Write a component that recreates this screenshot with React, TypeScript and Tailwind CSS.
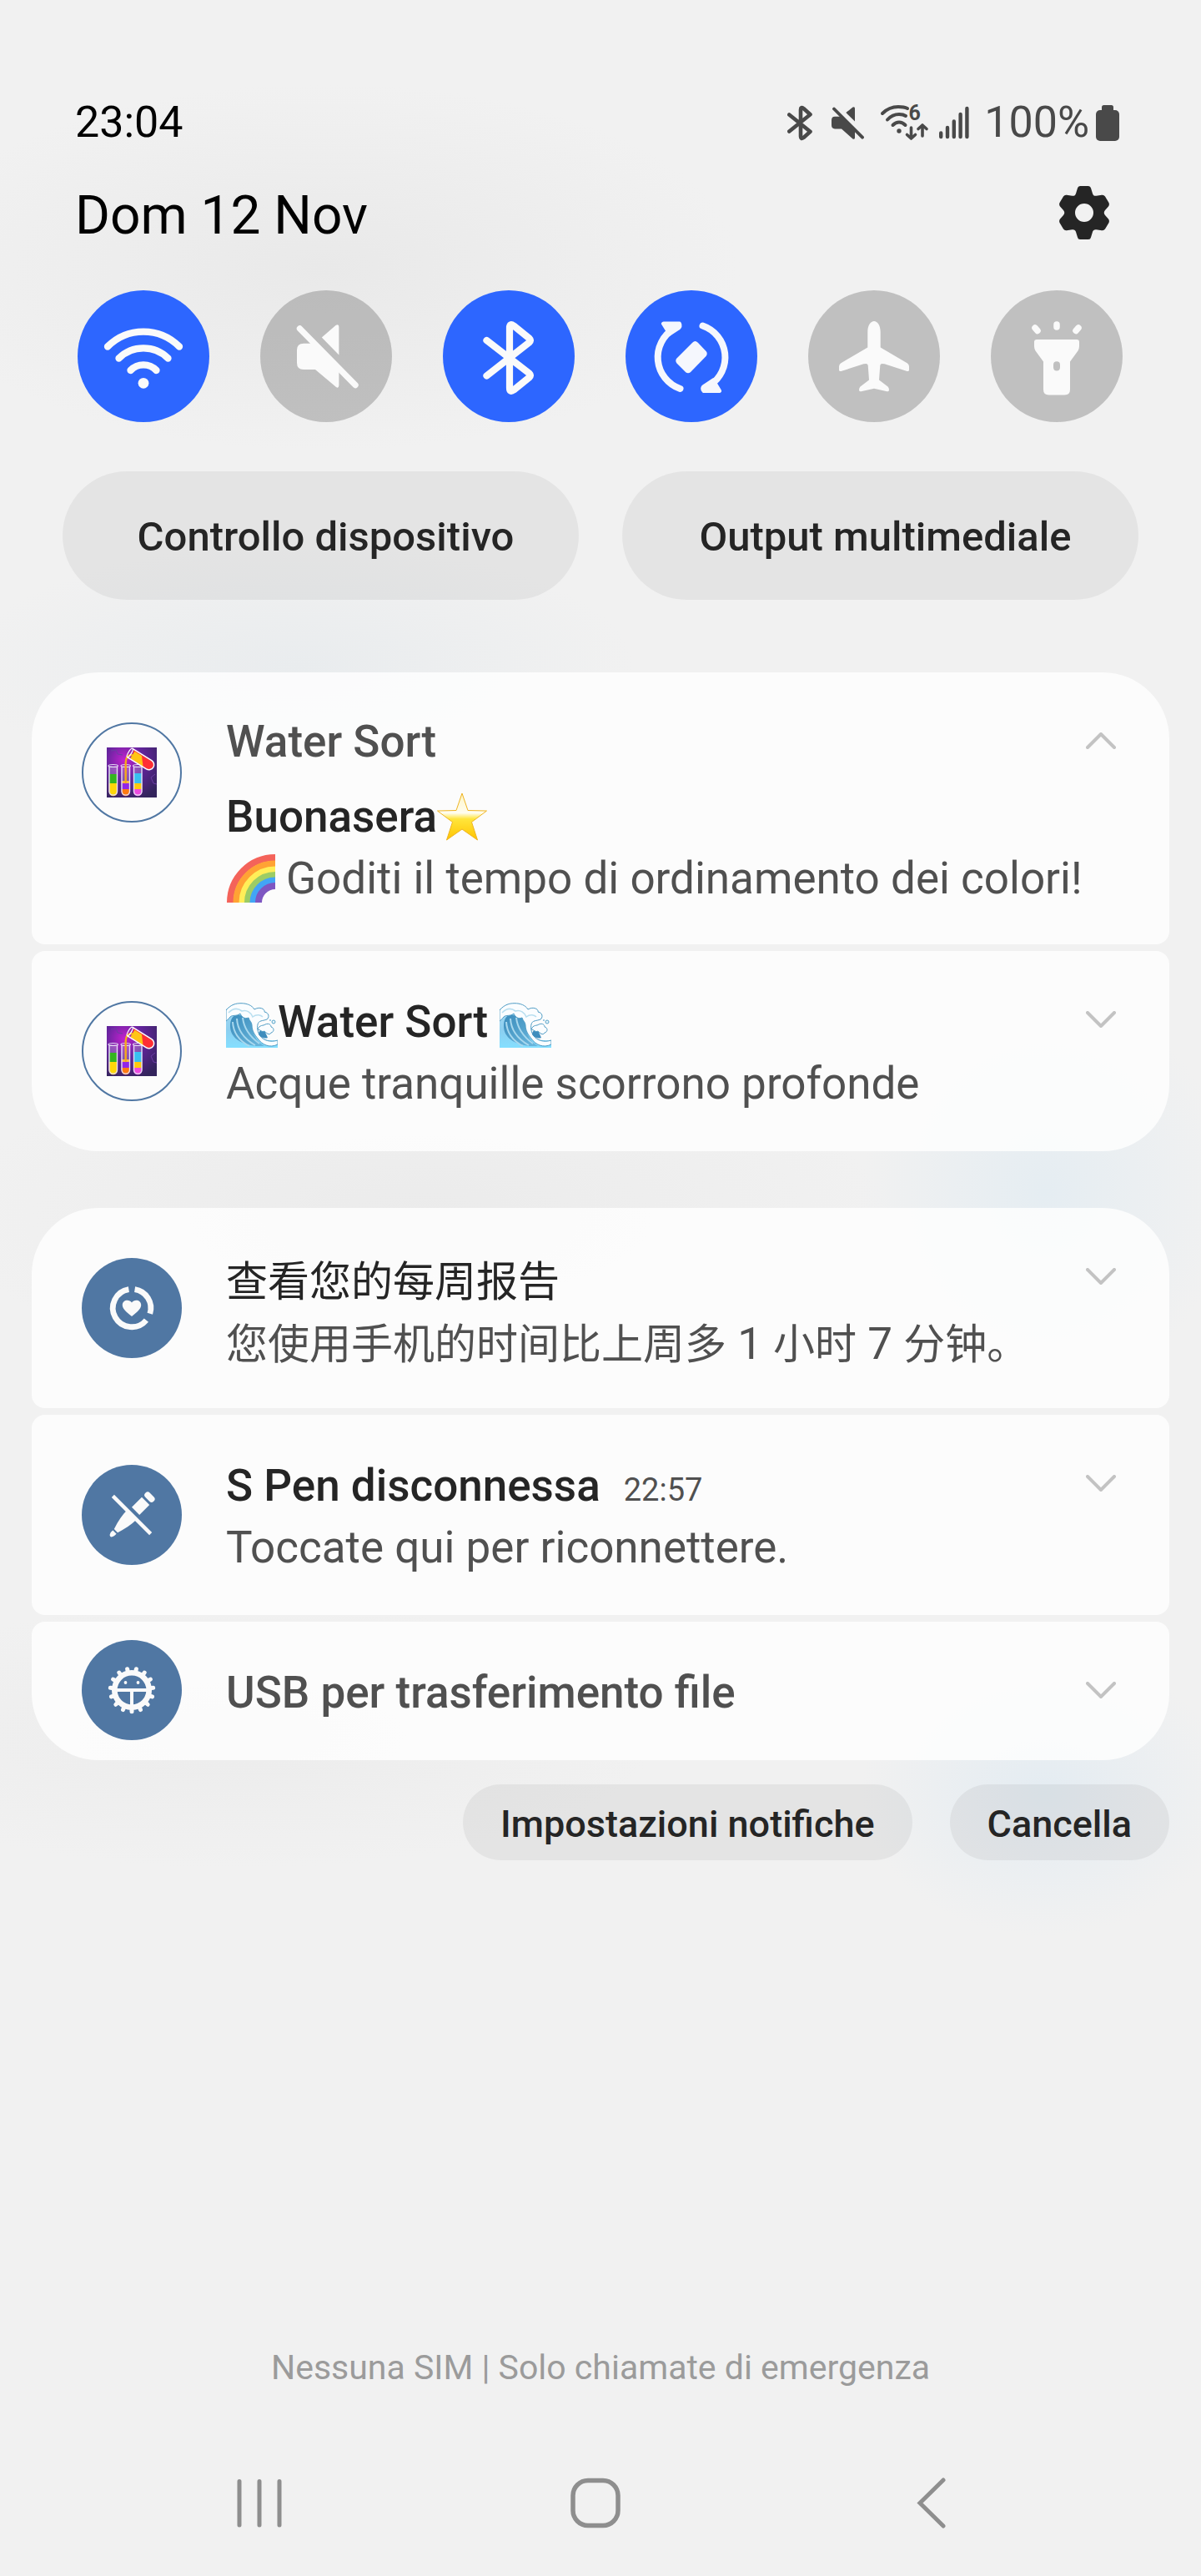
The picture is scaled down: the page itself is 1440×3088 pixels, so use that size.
import React from "react";

type IconProps = { className?: string };

/* ---------- Status bar icons ---------- */

function StatusBluetooth() {
  return (
    <svg viewBox="0 0 30 43" className="h-[43px] w-[30px]" fill="none" stroke="#494949" strokeWidth="4.6" strokeLinecap="round" strokeLinejoin="round" aria-label="Bluetooth">
      <path d="M2.3 11.5 27.5 31.8 19.5 39Q16 41.5 16 37.5V5.500Q16 1.500 19.500 4L27.500 11.200 2.300 31.500" />
    </svg>
  );
}

function StatusMute() {
  return (
    <svg viewBox="0 0 39 39" className="h-[39px] w-[39px]" fill="#494949" aria-label="Muto">
      <path d="M3 2.500 37 36.700" stroke="#494949" strokeWidth="3.800" strokeLinecap="round" />
      <path d="M4 11.700H13L28 27V37.500Q27.500 39.500 25.500 38.500L12 26.400H4Q0 26.400 0 22V16Q0 11.700 4 11.700Z" />
      <path d="M17.300 7 25.500 .6Q28 -.6 28 2V17.500Z" />
    </svg>
  );
}

function StatusWifi() {
  return (
    <svg viewBox="0 0 57 44" className="h-[44px] w-[57px] overflow-visible" fill="none" stroke="#494949" strokeWidth="4" strokeLinecap="round" strokeLinejoin="round" aria-label="Wi-Fi 6">
      <path d="M2 11Q10 3 21 3 28 3 32 5" />
      <path d="M8 18.500Q14 12 22 12 27 12 30 14" />
      <path d="M14.500 25Q18 21.500 22 21.500T29.500 25" />
      <circle cx="22" cy="32" r="2.700" fill="#494949" stroke="none" />
      <text x="33.500" y="19" fill="#494949" stroke="none" fontFamily="Roboto, sans-serif" fontWeight="700" fontSize="25">6</text>
      <path d="M36.500 28V40.500M31.500 36.500 36.500 41 41.500 36.500M50 38V25M45 29.500 50 25 55 29.500" strokeWidth="3.600" />
    </svg>
  );
}

function StatusSignal() {
  return (
    <svg viewBox="0 0 36 40" className="h-[40px] w-[36px]" stroke="#494949" strokeWidth="4.400" strokeLinecap="round" aria-label="Segnale">
      <path d="M2.200 32.500V37M10 26V37M17.800 18.500V37M25.600 10V37M33.400 3V37" />
    </svg>
  );
}

function StatusBattery() {
  return (
    <svg viewBox="0 0 28 43" className="h-[43px] w-[28px]" fill="#494949" aria-label="Batteria">
      <rect x="7" y="0" width="14" height="12" rx="2.500" />
      <rect x="0" y="6" width="28" height="37" rx="5" />
    </svg>
  );
}

function GearIcon() {
  return (
    <svg viewBox="0 0 60 64" className="h-16 w-[60px]" fill="#252525" aria-hidden="true">
      <path
        fillRule="evenodd"
        d="M25 0H35Q37.500 0 38 2.500L40 9Q41 12.300 44.500 11.800L51 10.800Q53.500 10.300 55 12.500L59.500 20Q60.500 22.500 59 24.500L55 29Q52.500 32 55 35L59 39.500Q60.500 41.500 59.500 44L55 51.500Q53.500 53.700 51 53.200L44.500 52.200Q41 51.700 40 55L38 61.500Q37.500 64 35 64H25Q22.500 64 22 61.500L20 55Q19 51.700 15.500 52.200L9 53.200Q6.500 53.700 5 51.500L.5 44Q-.5 41.500 1 39.500L5 35Q7.500 32 5 29L1 24.500Q-.5 22.500 .5 20L5 12.500Q6.500 10.300 9 10.800L15.500 11.800Q19 12.300 20 9L22 2.500Q22.500 0 25 0ZM30 21A11 11 0 1 0 30 43A11 11 0 1 0 30 21Z"
      />
    </svg>
  );
}

/* ---------- Quick toggle icons ---------- */

function TileSvg({ children }: { children: React.ReactNode }) {
  return (
    <svg viewBox="0 0 158 158" className="h-full w-full" fill="none" stroke="none" strokeLinecap="round" strokeLinejoin="round" aria-hidden="true">
      {children}
    </svg>
  );
}

const WifiGlyph = () => (
  <TileSvg>
    <g stroke="#fafafa" strokeWidth="8.300">
      <path d="M36 67.500A60.500 60.500 0 0 1 122 67.500" />
      <path d="M49.500 81.500A42 42 0 0 1 108.500 81.500" />
      <path d="M63.500 96A21.500 21.500 0 0 1 94.500 96" />
    </g>
    <circle cx="79" cy="111.300" r="6.400" fill="#fafafa" />
  </TileSvg>
);

const MuteGlyph = () => (
  <TileSvg>
    <path d="M47.500 46 114 113.500" stroke="#fafafa" strokeWidth="7.400" />
    <path d="M52 63.700H62L94.400 96V114Q94 118 91 116L66 95H52Q44 95 44 87V71.500Q44 63.700 52 63.700Z" fill="#fafafa" />
    <path d="M73.800 56.500 90.500 42Q94.400 40 94.400 44V77.500Z" fill="#fafafa" />
  </TileSvg>
);

const BluetoothGlyph = () => (
  <TileSvg>
    <path d="M52.500 60 103.500 99.500Q106 102 103.500 104.500L85 119.500Q80 123 80 117V45Q80 39 85 42.500L103.500 57.500Q106 60 103.500 62.500L52.500 102.500" stroke="#fafafa" strokeWidth="8.200" />
  </TileSvg>
);

const RotateGlyph = () => (
  <TileSvg>
    <g stroke="#f5f7fd" strokeWidth="8">
      <path d="M58 46A40 40 0 0 0 65.500 118" />
      <path d="M92.500 42.500A40 40 0 0 1 101 114" />
    </g>
    <g fill="#f5f7fd" stroke="#f5f7fd" strokeWidth="5">
      <path d="M45.500 40H64.500Q66 43 63 45.500L53 52Z" />
      <path d="M112.500 120.500H94Q91 117 94.500 115L105 108Z" />
      <path d="M82 64.500Q83.500 63 85 64.500L94.500 74.500Q95.800 76 94.500 77.500L76.500 96Q75 97.300 73.500 96L63.500 86Q62.200 84.500 63.500 83Z" />
    </g>
  </TileSvg>
);

const PlaneGlyph = () => (
  <TileSvg>
    <path
      d="M79 37C83 37 86.700 42 86.700 50V68.500L119 87.500Q121 89 121 91.500V95.500Q121 97.500 118.500 97L91.500 88.300Q86.500 87 86.300 90L85 107.500L95.500 115.500Q97 117 97 119.500 97 121.800 94.500 121.200L79 117.800 63.500 121.200Q61 121.800 61 119.500 61 117 62.500 115.500L73 107.500 71.700 90Q71.500 87 66.500 88.300L39.500 97Q37 97.500 37 95.500V91.500Q37 89 39 87.500L71.300 68.500V50C71.300 42 75 37 79 37Z"
      fill="#fafafa"
    />
  </TileSvg>
);

const TorchGlyph = () => (
  <TileSvg>
    <path
      fillRule="evenodd"
      d="M55 59H103Q106 59 106 62V67Q106 70 104.500 72.500L95 85.500V119Q95 125.500 88.500 125.500H69.500Q63 125.500 63 119V85.500L53.500 72.500Q52 70 52 67V62Q52 59 55 59ZM79 85.300Q75 85.300 75 89.500V92.300Q75 96.500 79 96.500 83 96.500 83 92.300V89.500Q83 85.300 79 85.300Z"
      fill="#fafafa"
    />
    <path d="M79 41V44M53 45 56 48.500M105 45 102 48.500" stroke="#fafafa" strokeWidth="7.500" />
  </TileSvg>
);

/* ---------- Emoji drawings ---------- */

function StarEmoji({ className }: IconProps) {
  return (
    <svg viewBox="0 0 60 58" className={className} role="img" aria-label="⭐">
      <defs>
        <linearGradient id="starFill" x1="0" y1="0" x2="0" y2="1">
          <stop offset="0" stopColor="#fff6c4" />
          <stop offset=".42" stopColor="#fffdf0" />
          <stop offset=".55" stopColor="#ffe53b" />
          <stop offset="1" stopColor="#ffc400" />
        </linearGradient>
      </defs>
      <path d="M30 1 37 21.500 59.500 22 41.500 35.500 48.500 57 30 44 11.500 57 18.500 35.500 .5 22 23 21.500Z" fill="url(#starFill)" stroke="#efb422" strokeWidth="1" strokeLinejoin="round" />
    </svg>
  );
}

function RainbowEmoji({ className }: IconProps) {
  const bands = [
    { r: 54, color: "#f4635a" },
    { r: 46.500, color: "#ffa334" },
    { r: 39.500, color: "#ffee58" },
    { r: 33, color: "#9ccc65" },
    { r: 26.500, color: "#42a5f5" },
    { r: 20, color: "#7e57c2" },
  ];
  return (
    <svg viewBox="0 0 60 58" className={className} role="img" aria-label="🌈">
      {bands.map((b) => (
        <path key={b.color} d={`M${59 - b.r} 58A${b.r} ${b.r} 0 0 1 59 ${58 - b.r}`} fill="none" stroke={b.color} strokeWidth="8" />
      ))}
    </svg>
  );
}

function WaveEmoji({ className }: IconProps) {
  return (
    <svg viewBox="0 0 62 54" className={className} role="img" aria-label="🌊">
      <defs>
        <linearGradient id="waveFill" x1="0" y1="0" x2="0" y2="1">
          <stop offset="0" stopColor="#a9daf1" />
          <stop offset=".6" stopColor="#8ccff0" />
          <stop offset="1" stopColor="#84dfff" />
        </linearGradient>
        <linearGradient id="waveFace" x1="0" y1="0" x2="1" y2="1">
          <stop offset="0" stopColor="#3b8cbc" />
          <stop offset="1" stopColor="#6cb9de" />
        </linearGradient>
      </defs>
      <path d="M0 8Q8 1 18 1L34 12 36 36Q42 47 62 45V54H0Z" fill="url(#waveFill)" />
      <path d="M5 28C5 18 10 13 17 15L30 17 32 32Q34 45 46 52H36C18 50 5 42 5 28Z" fill="url(#waveFace)" />
      <path d="M8 23Q9 42 28 52M13 19Q14 39 35 51M20 18Q22 36 40 49" fill="none" stroke="#a8d8ee" strokeWidth="2" />
      <path
        d="M0 9C6 2 12 .7 18 .7 25 .7 31 3 34 8 41 4 47 8 46 11 52 12 52 18 49 20 44 22 39 21 38 26 37 30 38 36 41 40 45 45 53 48 62 45V50C52 55 43 50 38 43 34 38 31 33 31 27 31 23 28 22 27 18 22 20 19 17 17 13 12 17 8 14 5 17 3 19 2 21 0 22Z"
        fill="#fafdff"
        stroke="#4e9bc4"
        strokeWidth="1"
      />
      <path d="M3 12C9 6 15 7 19 10 25 8 30 12 32 17 37 13 42 15 44 17" fill="none" stroke="#b9dff0" strokeWidth="1.600" />
      <path d="M39 38C39 33 43 32 46 33L50 42Q44 44 39 38Z" fill="#3f8dbd" />
      <path d="M38 32C40 26 45 28 47 26 52 24 54 27 54 29 58 30 58 35 54 36 52 40 48 36 46 34 43 36 41 32 38 32Z" fill="#fafdff" stroke="#4e9bc4" strokeWidth="1" />
      <circle cx="57" cy="23" r="2" fill="#e9f7fd" stroke="#57a2c8" strokeWidth="1" />
      <circle cx="53" cy="21" r="1" fill="#7db9d8" />
    </svg>
  );
}

/* ---------- Notification icons ---------- */

function WaterSortIcon() {
  const tubes = [
    { x: 2.500, layers: [{ y: 32, h: 12, c: "#34b51f" }, { y: 43, h: 16, c: "#ffd60a" }] },
    { x: 17.500, layers: [{ y: 40, h: 4, c: "#f7b84a" }, { y: 43, h: 8, c: "#9226e8" }, { y: 50, h: 9, c: "#ff7a12" }] },
    { x: 32, layers: [{ y: 31, h: 13, c: "#38c0f0" }, { y: 43, h: 8, c: "#ffc90e" }, { y: 50, h: 9, c: "#ec4be0" }] },
  ];
  return (
    <svg viewBox="0 0 60 60" className="h-[60px] w-[60px]" aria-hidden="true">
      <defs>
        <radialGradient id="labGlow" cx=".35" cy=".25" r=".85">
          <stop offset="0" stopColor="#c322cf" />
          <stop offset=".45" stopColor="#62249c" />
          <stop offset="1" stopColor="#33245c" />
        </radialGradient>
      </defs>
      <rect width="60" height="60" fill="url(#labGlow)" />
      <path d="M5 4 11 3 13 8 19 9M53 36 58 32M53 36 56 43 60 44" fill="none" stroke="#6c3da3" strokeWidth="1" />
      {tubes.map((t) => (
        <g key={t.x}>
          <clipPath id={`tube${Math.round(t.x)}`}>
            <path d={`M${t.x} 22H${t.x + 10.500}V53A5.200 5.200 0 0 1 ${t.x} 53Z`} />
          </clipPath>
          <g clipPath={`url(#tube${Math.round(t.x)})`}>
            <rect x={t.x} y="22" width="10.500" height="37" fill="#ffffff" opacity=".22" />
            {t.layers.map((l) => (
              <rect key={l.y} x={t.x} y={l.y} width="10.500" height={l.h} fill={l.c} />
            ))}
          </g>
          <path d={`M${t.x + .5} 23V53A4.800 4.800 0 0 0 ${t.x + 10} 53V23`} fill="none" stroke="#e6dcf5" strokeWidth="1.400" />
          <ellipse cx={t.x + 5.200} cy="22" rx="5.700" ry="1.500" fill="none" stroke="#e6dcf5" strokeWidth="1.200" />
        </g>
      ))}
      <path d="M30 9Q23 9 22.700 18V42" fill="none" stroke="#f5a91b" strokeWidth="2.400" strokeLinecap="round" />
      <g transform="translate(28 6) rotate(32)">
        <path d="M2 -5H27A5.500 5.500 0 0 1 27 6H6Z" fill="#ff2f35" />
        <path d="M4 -4H14L22 6H4Z" fill="#ffc515" />
        <path d="M0 -5.500H27A6 6 0 0 1 27 6.500H0" fill="none" stroke="#fff" strokeWidth="1.500" />
        <ellipse cx="0" cy=".5" rx="1.800" ry="6" fill="none" stroke="#fff" strokeWidth="1.300" />
      </g>
    </svg>
  );
}

function WellbeingIcon() {
  return (
    <svg viewBox="0 0 120 120" className="h-full w-full" aria-hidden="true">
      <g fill="none" stroke="#fafafa" strokeWidth="6.800">
        <path d="M63.600 37.600A22.700 22.700 0 0 1 81.800 66.800" />
        <path d="M77.400 74.600A22.700 22.700 0 1 1 56.400 37.600" />
      </g>
      <path d="M60 70C52 64 48.800 60 48.800 56.500C48.800 50 57 49 60 53.500C63 49 71.200 50 71.200 56.500C71.200 60 68 64 60 70Z" fill="#fafafa" />
    </svg>
  );
}

function PenIcon() {
  return (
    <svg viewBox="0 0 120 120" className="h-full w-full" aria-hidden="true">
      <g transform="translate(60 60) rotate(45)" fill="#fafafa">
        <rect x="-32" y="-2.200" width="64" height="4.400" />
        <rect x="-7" y="-34" width="14" height="7.500" rx="3.500" />
        <rect x="-6.500" y="-23.500" width="13" height="17" />
        <path d="M-8 1H8Q8 12 3 27H-3Q-8 12 -8 1Z" />
        <path d="M-3 29H3V32.500Q2 36.500 0 36.500T-3 32.500Z" />
      </g>
    </svg>
  );
}

function AndroidGearIcon() {
  const teeth = Array.from({ length: 15 }, (_, i) => i * 24 + 180);
  return (
    <svg viewBox="0 0 120 120" className="h-full w-full" aria-hidden="true">
      <g stroke="#fafafa" fill="none">
        {teeth.map((angle) => (
          <path key={angle} d="M60 38V34.200" strokeWidth="5" strokeLinecap="round" transform={`rotate(${angle} 60 60)`} />
        ))}
        <circle cx="60" cy="60" r="20.700" strokeWidth="6.600" />
        <path d="M42 60H78M60 60V80" strokeWidth="4" />
      </g>
      <circle cx="52.500" cy="51" r="1.900" fill="#fafafa" />
      <circle cx="67.500" cy="51" r="1.900" fill="#fafafa" />
    </svg>
  );
}

/* ---------- Building blocks ---------- */

function Tile({ label, on, children }: { label: string; on: boolean; children: React.ReactNode }) {
  return (
    <button type="button" aria-label={label} aria-pressed={on} className={`size-[158px] rounded-full ${on ? "bg-[#2d66ff]" : "bg-black/20"}`}>
      {children}
    </button>
  );
}

function ExpandButton({ open }: { open?: boolean }) {
  return (
    <button type="button" aria-label={open ? "Comprimi" : "Espandi"} aria-expanded={!!open} className="mt-[52px] flex size-[60px] shrink-0 items-center justify-center">
      <svg viewBox="0 0 36 20" className="h-5 w-9" fill="none" stroke="#c3c3c3" strokeWidth="4" strokeLinecap="round" strokeLinejoin="round" aria-hidden="true">
        <path d={open ? "M2 18 18 2 34 18" : "M2 2 18 18 34 2"} />
      </svg>
    </button>
  );
}

function AppBadge({ compact, outlined, children }: { compact?: boolean; outlined?: boolean; children: React.ReactNode }) {
  return (
    <div
      className={`flex size-[120px] shrink-0 items-center justify-center rounded-full ${compact ? "mt-[22px]" : "mt-[60px]"} ${
        outlined ? "border-2 border-[#5077a3]" : "bg-[#5077a3]"
      }`}
    >
      {children}
    </div>
  );
}

function Card({
  position,
  icon,
  open,
  padding = "pt-12 pb-11",
  children,
}: {
  position: "first" | "middle" | "last";
  icon: React.ReactNode;
  open?: boolean;
  padding?: string;
  children: React.ReactNode;
}) {
  const corners = {
    first: "rounded-t-[80px] rounded-b-2xl",
    middle: "rounded-2xl",
    last: "rounded-t-2xl rounded-b-[80px]",
  }[position];
  return (
    <article className={`flex items-start bg-white/80 pr-[52px] pl-[60px] ${corners}`}>
      {icon}
      <div className={`ml-[53px] min-w-0 flex-1 text-[53px] leading-[74px] whitespace-nowrap text-[#505050] ${padding}`}>{children}</div>
      <ExpandButton open={open} />
    </article>
  );
}

export default function App() {
  return (
    <main className="flex min-h-screen w-full flex-col bg-[#f1f1f1] bg-[radial-gradient(500px_220px_at_27%_320px,#e9e9e9,transparent),radial-gradient(400px_150px_at_25%_800px,#e9ecee,transparent),radial-gradient(560px_200px_at_35%_1460px,#ebebeb,transparent),radial-gradient(220px_240px_at_87%_1430px,#e5edf2,transparent),radial-gradient(500px_160px_at_20%_2080px,#ececec,transparent),radial-gradient(220px_170px_at_87%_2150px,#e4ecf2,transparent)] font-[Roboto,'Noto_Sans_CJK_SC',sans-serif]">
      <header>
        <div className="flex h-[179px] items-end justify-between pr-[98px] pl-[90px]">
          <time className="text-[52px] leading-[64px] text-black">23:04</time>
          <div className="flex h-16 items-center text-[#494949]">
            <StatusBluetooth />
            <div className="ml-[23px]"><StatusMute /></div>
            <div className="ml-5"><StatusWifi /></div>
            <div className="ml-[13px]"><StatusSignal /></div>
            <span className="ml-[18px] text-[52px] leading-[64px]">100%</span>
            <div className="ml-2"><StatusBattery /></div>
          </div>
        </div>
        <div className="mt-10 flex items-start justify-between pr-[110px] pl-[90px]">
          <h1 className="text-[64px] leading-[80px] text-black">Dom 12 Nov</h1>
          <button type="button" aria-label="Impostazioni" className="mt-1"><GearIcon /></button>
        </div>
      </header>

      <section aria-label="Impostazioni rapide" className="mt-[49px] flex justify-between pr-[94px] pl-[93px]">
        <Tile label="Wi-Fi" on><WifiGlyph /></Tile>
        <Tile label="Muto" on={false}><MuteGlyph /></Tile>
        <Tile label="Bluetooth" on><BluetoothGlyph /></Tile>
        <Tile label="Rotazione automatica" on><RotateGlyph /></Tile>
        <Tile label="Modalità aereo" on={false}><PlaneGlyph /></Tile>
        <Tile label="Torcia" on={false}><TorchGlyph /></Tile>
      </section>

      <div className="mt-[59px] grid grid-cols-2 gap-[52px] px-[75px] text-[49px] leading-[60px] font-medium text-[#252525]">
        <button type="button" className="h-[154px] rounded-full bg-black/5 pt-1 pl-3">Controllo dispositivo</button>
        <button type="button" className="h-[154px] rounded-full bg-black/5 pt-1 pl-3">Output multimediale</button>
      </div>

      <section aria-label="Notifiche" className="mt-[87px] flex flex-col gap-[68px] px-[38px]">
        <div className="flex flex-col gap-2">
          <Card position="first" open padding="pt-[46px] pb-[42px]" icon={<AppBadge outlined><WaterSortIcon /></AppBadge>}>
            <p className="font-medium">Water Sort</p>
            <h2 className="mt-4 flex items-center font-medium text-[#252525]">
              Buonasera<StarEmoji className="h-[58px] w-[60px] shrink-0" />
            </h2>
            <p className="flex items-center">
              <RainbowEmoji className="mr-3 h-[58px] w-[60px] shrink-0" />Goditi il tempo di ordinamento dei colori!
            </p>
          </Card>
          <Card position="last" icon={<AppBadge outlined><WaterSortIcon /></AppBadge>}>
            <h2 className="flex items-center font-medium text-[#252525]">
              <WaveEmoji className="mt-2 h-[54px] w-[62px] shrink-0" />Water Sort<WaveEmoji className="mt-2 ml-[14px] h-[54px] w-[62px] shrink-0" />
            </h2>
            <p>Acque tranquille scorrono profonde</p>
          </Card>
        </div>

        <div className="flex flex-col gap-2">
          <Card position="first" padding="pt-[52px] pb-10" icon={<AppBadge><WellbeingIcon /></AppBadge>}>
            <h2 lang="zh" className="h-[74px] text-[50px] text-[#252525]">查看您的每周报告</h2>
            <p lang="zh" className="h-[74px] text-[50px]">
              您使用手机的时间比上周多<span className="text-[53px]"> 1 </span>小时<span className="text-[53px]"> 7 </span>分钟。
            </p>
          </Card>
          <Card position="middle" icon={<AppBadge><PenIcon /></AppBadge>}>
            <div className="flex items-baseline">
              <h2 className="font-medium text-[#252525]">S Pen disconnessa</h2>
              <time className="ml-7 text-[38px] leading-none">22:57</time>
            </div>
            <p>Toccate qui per riconnettere.</p>
          </Card>
          <Card position="last" icon={<AppBadge compact><AndroidGearIcon /></AppBadge>}>
            <h2 className="font-medium">USB per trasferimento file</h2>
          </Card>
        </div>
      </section>

      <div className="mt-[29px] flex justify-end gap-[45px] px-[38px] text-[45px] leading-[56px] font-medium text-[#252525]">
        <button type="button" className="h-[91px] rounded-full bg-black/5 px-[45px] pt-1">Impostazioni notifiche</button>
        <button type="button" className="h-[91px] rounded-full bg-black/5 px-[45px] pt-1">Cancella</button>
      </div>

      <footer className="mt-auto">
        <p className="text-center text-[41px] leading-[48px] text-[#9b9b9b]">Nessuna SIM | Solo chiamate di emergenza</p>
        <nav aria-label="Navigazione" className="mt-[108px] flex justify-between pr-[294px] pb-[57px] pl-[281px]">
          <button type="button" aria-label="Recenti" className="flex w-[60px] justify-center">
            <svg viewBox="0 0 56 61" className="h-[61px] w-14" stroke="#8e8e8e" strokeWidth="5" strokeLinecap="round">
              <path d="M4 4.500V57M28 4.500V57M52 4.500V57" />
            </svg>
          </button>
          <button type="button" aria-label="Home" className="flex w-[60px] justify-center">
            <svg viewBox="0 0 60 61" className="h-[61px] w-[60px]" fill="none" stroke="#8e8e8e" strokeWidth="5.500">
              <rect x="3" y="3.500" width="54" height="54" rx="18" />
            </svg>
          </button>
          <button type="button" aria-label="Indietro" className="flex w-[60px] justify-center">
            <svg viewBox="0 0 36 61" className="h-[61px] w-9" fill="none" stroke="#8e8e8e" strokeWidth="5" strokeLinecap="round" strokeLinejoin="miter">
              <path d="M33 3 5 30.500 33 58" />
            </svg>
          </button>
        </nav>
      </footer>
    </main>
  );
}
